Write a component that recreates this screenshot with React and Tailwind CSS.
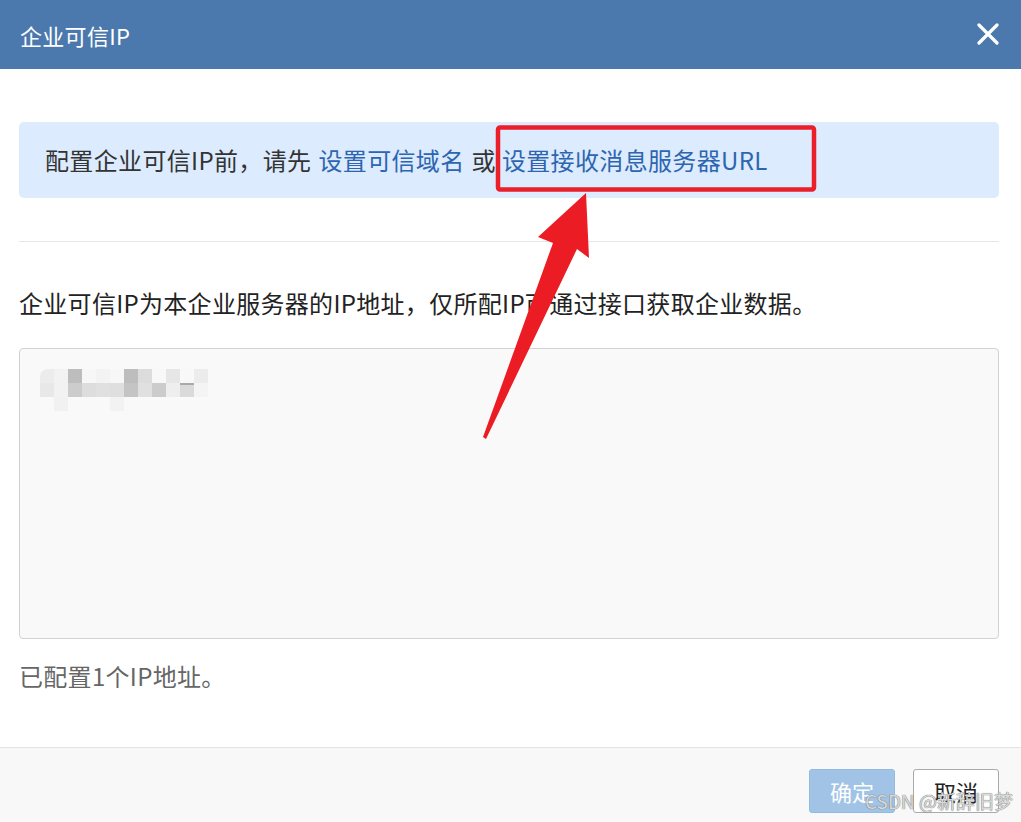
import React from "react";

const FONT = { fontFamily: '"Noto Sans CJK SC", "Noto Sans", sans-serif' };

const rows = [
  ["#ececec", "#f2f2f2", "#bdbdbd", "#f7f7f7", "#f3f3f3", "#f7f7f7", "#bdbdbd", "#dcdcdc", "#f8f8f8", "#e6e6e6", "#f8f8f8", "#ececec"],
  ["#e8e8e8", "#f2f2f2", "#cccccc", "#dddddd", "#e0e0e0", "#dfdfdf", "#c4c4c4", "#e0e0e0", "#cccccc", "#eeeeee", "#dadada", "#f4f4f4"],
  ["#f9f9f9", "#f1f1f1", "#f9f9f9", "#f9f9f9", "#f9f9f9", "#f2f2f2", "#f9f9f9", "#f9f9f9", "#f9f9f9", "#f9f9f9", "#f9f9f9", "#f9f9f9"],
];

function Blurred() {
  return (
    <div className="flex flex-col">
      {rows.map((r, i) => (
        <div key={i} className="flex">
          {r.map((c, j) => (
            <div
              key={j}
              className={`h-[14px] w-[14px] ${i === 0 && j === 0 ? "rounded-tl-[8px]" : ""} ${i === 1 && j === 10 ? "border-t-2 border-[#aaaaaa]" : ""}`}
              style={{ backgroundColor: c }}
            />
          ))}
        </div>
      ))}
    </div>
  );
}

export default function App() {
  return (
    <div className="relative flex h-[822px] w-[1021px] flex-col overflow-hidden bg-white" style={FONT}>
      {/* Header */}
      <div className="flex h-[69px] shrink-0 items-center justify-between bg-[#4c79ad] pl-[20px] pr-[22px]">
        <div className="text-[22px] leading-[30px] tracking-[0.3px] text-white">企业可信IP</div>
        <svg width="22" height="22" viewBox="0 0 22 22" className="mt-[-2px]">
          <path d="M2 2 L20 20 M20 2 L2 20" stroke="white" strokeWidth="3.2" strokeLinecap="round" />
        </svg>
      </div>

      {/* Body */}
      <div className="flex flex-1 flex-col pl-[19px] pr-[22px]">
        <div className="mt-[53px] flex h-[76px] items-center rounded-[5px] bg-[#dcebfd] pl-[26px] text-[24px] leading-[34px] tracking-[0.35px] text-[#333333]">
          <span>配置企业可信IP前，请先</span>
          <span className="ml-[7px] text-[#2d65b0]">设置可信域名</span>
          <span className="ml-[7px]">或</span>
          <span className="ml-[6px] text-[#2d65b0]">设置接收消息服务器URL</span>
        </div>

        <div className="mt-[43px] h-px bg-[#e6e6e6]" />

        <div className="mt-[43px] text-[24px] leading-[36px] tracking-[0.3px] text-[#222222]">
          企业可信IP为本企业服务器的IP地址，仅所配IP可通过接口获取企业数据。
        </div>

        <div className="mt-[27px] h-[291px] rounded-[4px] border border-[#d2d2d2] bg-[#f9f9f9] pl-[20px] pt-[20px]">
          <Blurred />
        </div>

        <div className="mt-[19px] text-[24px] leading-[36px] tracking-[0.3px] text-[#666666]">已配置1个IP地址。</div>
      </div>

      {/* Footer */}
      <div className="flex h-[75px] shrink-0 items-start justify-end gap-[18px] border-t border-[#e4e4e4] bg-[#f8f8f8] pr-[22px] pt-[21px]">
        <div className="flex h-[44px] w-[86px] items-center justify-center rounded-[3px] border border-[#93bbe2] bg-[#a1c4e6] text-[22px] text-white">
          确定
        </div>
        <div className="flex h-[44px] w-[86px] items-center justify-center rounded-[3px] border border-[#aaaaaa] bg-white text-[22px] text-[#222222]">
          取消
        </div>
      </div>

      {/* Annotation overlay */}
      <svg className="pointer-events-none absolute left-0 top-0" width="1021" height="822" viewBox="0 0 1021 822">
        <rect x="498" y="127.5" width="316" height="62" rx="2" fill="none" stroke="#ea1f2a" strokeWidth="4.5" />
        <polygon
          points="586,193 589,258 577,249 486,439 483,437 553,243 538,237"
          fill="#ec1c24"
          strokeLinejoin="round"
        />
      </svg>

      {/* Watermark */}
      <div
        className="pointer-events-none absolute left-[865px] top-[787px] text-[19px] leading-[28px] text-[#d9d9d9]"
        style={{ textShadow: "0 0 1px #777, 0 0 1px #777" }}
      >
        CSDN @新辞旧梦
      </div>
    </div>
  );
}
